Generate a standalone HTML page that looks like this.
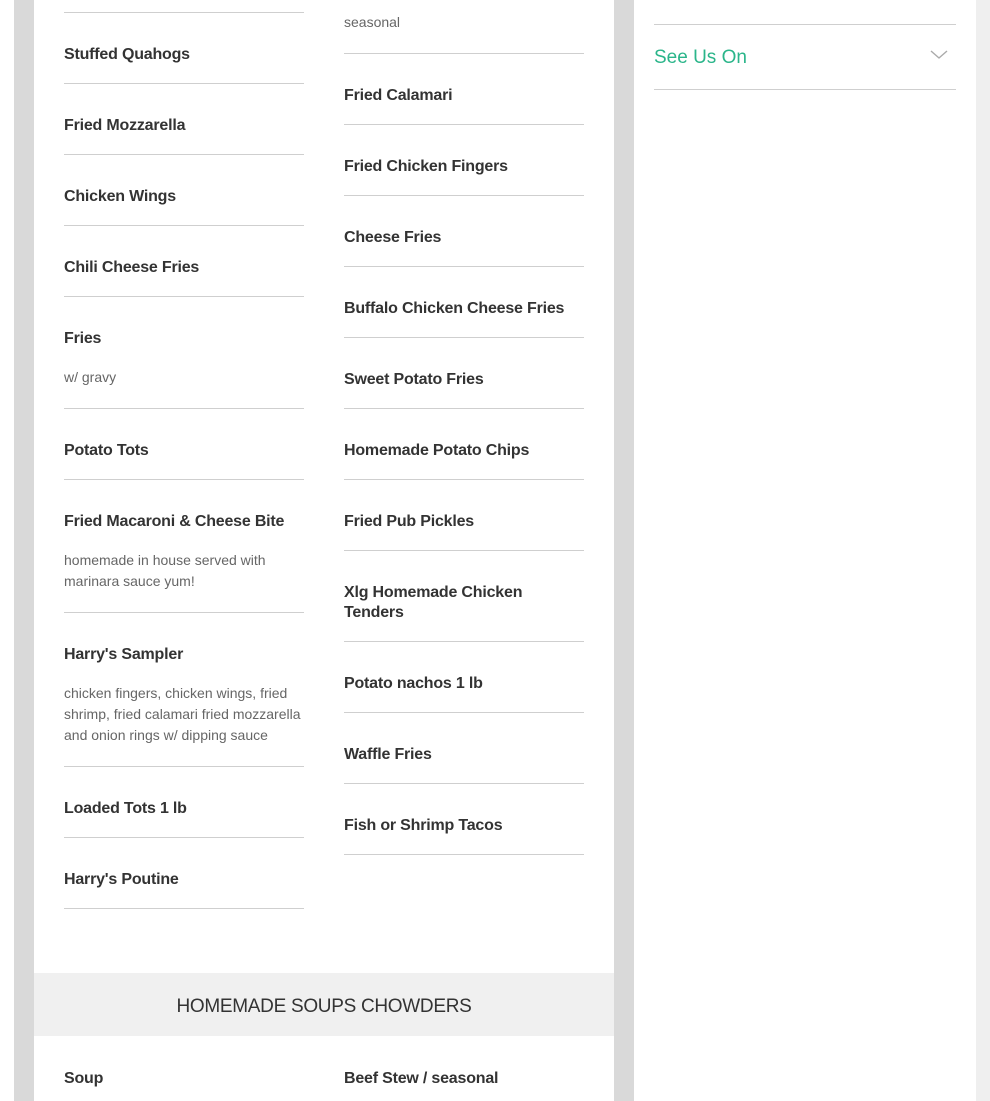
<!DOCTYPE html><html><head><meta charset="utf-8"><style>
body{margin:0;width:990px;height:1101px;position:relative;overflow:hidden;background:#fff;font-family:"Liberation Sans",sans-serif}
.a{position:absolute}
.g{background:#d9d9d9}
.l{position:absolute;height:1px;background:#cfcfcf;width:240px}
.n{position:absolute;font-size:16px;font-weight:bold;color:#333;line-height:20px;white-space:nowrap;letter-spacing:-0.2px;margin-top:2px}
.d{position:absolute;font-size:14px;color:#666;line-height:21px;width:245px;margin-top:1px}
</style></head><body>
<div class="a g" style="left:14px;top:0;width:20px;height:1101px"></div>
<div class="a g" style="left:614px;top:0;width:20px;height:1101px"></div>
<div class="a" style="left:976px;top:0;width:14px;height:1101px;background:#efefef"></div>
<div class="a" style="left:34px;top:973px;width:580px;height:63px;background:#f0f0f0"></div>
<div class="a" style="left:34px;top:996px;width:580px;text-align:center;font-size:19px;color:#333;line-height:22px;letter-spacing:-0.3px">HOMEMADE SOUPS CHOWDERS</div>

<div class="l" style="left:64px;top:12px"></div>
<div class="n" style="left:64px;top:43px">Stuffed Quahogs</div>
<div class="l" style="left:64px;top:83px"></div>
<div class="n" style="left:64px;top:114px">Fried Mozzarella</div>
<div class="l" style="left:64px;top:154px"></div>
<div class="n" style="left:64px;top:185px">Chicken Wings</div>
<div class="l" style="left:64px;top:225px"></div>
<div class="n" style="left:64px;top:256px">Chili Cheese Fries</div>
<div class="l" style="left:64px;top:296px"></div>
<div class="n" style="left:64px;top:327px">Fries</div>
<div class="d" style="left:64px;top:366px">w/ gravy</div>
<div class="l" style="left:64px;top:408px"></div>
<div class="n" style="left:64px;top:439px">Potato Tots</div>
<div class="l" style="left:64px;top:479px"></div>
<div class="n" style="left:64px;top:510px">Fried Macaroni &amp; Cheese Bite</div>
<div class="d" style="left:64px;top:549px">homemade in house served with marinara sauce yum!</div>
<div class="l" style="left:64px;top:612px"></div>
<div class="n" style="left:64px;top:643px">Harry's Sampler</div>
<div class="d" style="left:64px;top:682px">chicken fingers, chicken wings, fried shrimp, fried calamari fried mozzarella and onion rings w/ dipping sauce</div>
<div class="l" style="left:64px;top:766px"></div>
<div class="n" style="left:64px;top:797px">Loaded Tots 1 lb</div>
<div class="l" style="left:64px;top:837px"></div>
<div class="n" style="left:64px;top:868px">Harry's Poutine</div>
<div class="l" style="left:64px;top:908px"></div>
<div class="n" style="left:64px;top:1067px">Soup</div>

<div class="d" style="left:344px;top:11px">seasonal</div>
<div class="l" style="left:344px;top:53px"></div>
<div class="n" style="left:344px;top:84px">Fried Calamari</div>
<div class="l" style="left:344px;top:124px"></div>
<div class="n" style="left:344px;top:155px">Fried Chicken Fingers</div>
<div class="l" style="left:344px;top:195px"></div>
<div class="n" style="left:344px;top:226px">Cheese Fries</div>
<div class="l" style="left:344px;top:266px"></div>
<div class="n" style="left:344px;top:297px">Buffalo Chicken Cheese Fries</div>
<div class="l" style="left:344px;top:337px"></div>
<div class="n" style="left:344px;top:368px">Sweet Potato Fries</div>
<div class="l" style="left:344px;top:408px"></div>
<div class="n" style="left:344px;top:439px">Homemade Potato Chips</div>
<div class="l" style="left:344px;top:479px"></div>
<div class="n" style="left:344px;top:510px">Fried Pub Pickles</div>
<div class="l" style="left:344px;top:550px"></div>
<div class="n" style="left:344px;top:581px">Xlg Homemade Chicken<br>Tenders</div>
<div class="l" style="left:344px;top:641px"></div>
<div class="n" style="left:344px;top:672px">Potato nachos 1 lb</div>
<div class="l" style="left:344px;top:712px"></div>
<div class="n" style="left:344px;top:743px">Waffle Fries</div>
<div class="l" style="left:344px;top:783px"></div>
<div class="n" style="left:344px;top:814px">Fish or Shrimp Tacos</div>
<div class="l" style="left:344px;top:854px"></div>
<div class="n" style="left:344px;top:1067px">Beef Stew / seasonal</div>

<div class="l" style="left:654px;top:24px;width:302px"></div>
<div class="a" style="left:654px;top:47px;font-size:19px;color:#2bb58a;line-height:22px">See Us On</div>
<svg class="a" style="left:930px;top:49px" width="18" height="12" viewBox="0 0 18 12"><path d="M1 2L9 9L17 2" fill="none" stroke="#aaa" stroke-width="1.4"/></svg>
<div class="l" style="left:654px;top:89px;width:302px"></div>
</body></html>
